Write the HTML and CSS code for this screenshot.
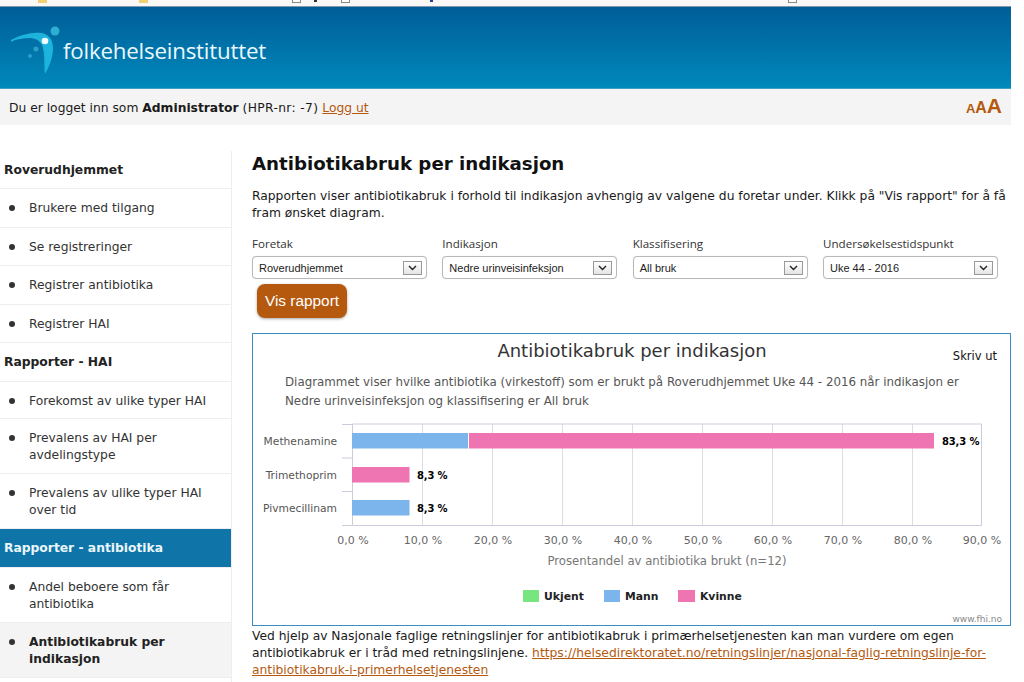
FILE: index.html
```html
<!DOCTYPE html>
<html lang="no">
<head>
<meta charset="utf-8">
<title>Antibiotikabruk per indikasjon</title>
<link rel="stylesheet" href="styles.css">
</head>
<body>
<div class="chrome">
  <i class="mark fav f1"></i><i class="mark fav f2"></i><i class="mark box b1"></i><i class="mark dot d1"></i><i class="mark box b2"></i><i class="mark dot d2"></i><i class="mark box b3"></i>
</div>
<div class="shell">
  <header class="banner">
    <svg class="logo" width="52" height="50" viewBox="0 0 52 50" aria-hidden="true">
      <path d="M1 14 C10 9 22 6 31 7 C38 8 43 13 43 22 C43 32 39 41 35 48 C34 40 35 30 33 22 C32 16 26 12 20 12 C13 12 6 13 1 16 Z" fill="#1cb4dc"/>
      <circle cx="45" cy="5" r="4.500" fill="#2dafd3"/>
      <circle cx="35" cy="15" r="3.300" fill="#f2fbff"/>
      <circle cx="26" cy="23" r="2.500" fill="#2b9fc8"/>
      <circle cx="20" cy="30" r="2" fill="#2b9fc8"/>
    </svg>
    <span class="brand">folkehelseinstituttet</span>
  </header>
  <div class="userbar">
    <p class="who">Du er logget inn som <b>Administrator</b> <span class="hpr">(HPR-nr: -7)</span> <a href="#">Logg ut</a></p>
    <div class="sizes"><span class="s1">A</span><span class="s2">A</span><span class="s3">A</span></div>
  </div>
  <div class="layout">
    <nav class="side">
      <h3 class="sec">Roverudhjemmet</h3>
      <ul>
        <li>Brukere med tilgang</li>
        <li>Se registreringer</li>
        <li>Registrer antibiotika</li>
        <li>Registrer HAI</li>
      </ul>
      <h3 class="sec">Rapporter - HAI</h3>
      <ul class="tight">
        <li>Forekomst av ulike typer HAI</li>
        <li>Prevalens av HAI per avdelingstype</li>
        <li>Prevalens av ulike typer HAI over tid</li>
      </ul>
      <h3 class="sec on">Rapporter - antibiotika</h3>
      <ul class="tight">
        <li>Andel beboere som får antibiotika</li>
        <li class="cur">Antibiotikabruk per indikasjon</li>
      </ul>
    </nav>
    <main class="main">
      <h1>Antibiotikabruk per indikasjon</h1>
      <p class="intro">Rapporten viser antibiotikabruk i forhold til indikasjon avhengig av valgene du foretar under. Klikk på "Vis rapport" for å få fram ønsket diagram.</p>
      <div class="filters">
        <div class="field"><label>Foretak</label><div class="sel"><span>Roverudhjemmet</span><i class="arrow"><svg width="9" height="6" viewBox="0 0 9 6"><path d="M1 1l3.500 3.500L8 1" fill="none" stroke="#222" stroke-width="1.400"/></svg></i></div></div>
        <div class="field"><label>Indikasjon</label><div class="sel"><span>Nedre urinveisinfeksjon</span><i class="arrow"><svg width="9" height="6" viewBox="0 0 9 6"><path d="M1 1l3.500 3.500L8 1" fill="none" stroke="#222" stroke-width="1.400"/></svg></i></div></div>
        <div class="field"><label>Klassifisering</label><div class="sel"><span>All bruk</span><i class="arrow"><svg width="9" height="6" viewBox="0 0 9 6"><path d="M1 1l3.500 3.500L8 1" fill="none" stroke="#222" stroke-width="1.400"/></svg></i></div></div>
        <div class="field"><label>Undersøkelsestidspunkt</label><div class="sel"><span>Uke 44 - 2016</span><i class="arrow"><svg width="9" height="6" viewBox="0 0 9 6"><path d="M1 1l3.500 3.500L8 1" fill="none" stroke="#222" stroke-width="1.400"/></svg></i></div></div>
      </div>
      <button class="run">Vis rapport</button>
      <section class="report">
        <svg class="chart" width="757" height="291" viewBox="253 334 757 291">
          <text x="632" y="357" class="t-title" text-anchor="middle">Antibiotikabruk per indikasjon</text>
          <text x="997" y="360" class="t-print" text-anchor="end">Skriv ut</text>
          <text x="285" y="386" class="t-desc">Diagrammet viser hvilke antibiotika (virkestoff) som er brukt på Roverudhjemmet Uke 44 - 2016 når indikasjon er</text>
          <text x="285" y="405" class="t-desc">Nedre urinveisinfeksjon og klassifisering er All bruk</text>
          <g class="grid">
            <path d="M422.500 424V525M492.500 424V525M562.500 424V525M632.500 424V525M702.500 424V525M772.500 424V525M842.500 424V525M912.500 424V525"/>
          </g>
          <path class="frame" d="M352.500 424H981.500V525.500H352.500ZM342 424.500H352M342 458H352M342 491.500H352M342 525.500H352"/>
          <rect x="352" y="433" width="116" height="15.500" fill="#7cb5ec"/>
          <rect x="469" y="433" width="465" height="15.500" fill="#ee75b2"/>
          <rect x="352" y="467" width="57.500" height="15.500" fill="#ee75b2"/>
          <rect x="352" y="500" width="57.500" height="15.500" fill="#7cb5ec"/>
          <g class="t-cat" text-anchor="end">
            <text x="337" y="445">Methenamine</text>
            <text x="337" y="479">Trimethoprim</text>
            <text x="337" y="512">Pivmecillinam</text>
          </g>
          <g class="t-val">
            <text x="942" y="445">83,3 %</text>
            <text x="417" y="479">8,3 %</text>
            <text x="417" y="512">8,3 %</text>
          </g>
          <g class="t-tick" text-anchor="middle">
            <text x="353" y="544">0,0 %</text><text x="423" y="544">10,0 %</text><text x="493" y="544">20,0 %</text><text x="563" y="544">30,0 %</text><text x="633" y="544">40,0 %</text><text x="703" y="544">50,0 %</text><text x="773" y="544">60,0 %</text><text x="843" y="544">70,0 %</text><text x="913" y="544">80,0 %</text><text x="982" y="544">90,0 %</text>
          </g>
          <text x="667" y="565" class="t-axis" text-anchor="middle">Prosentandel av antibiotika brukt (n=12)</text>
          <rect x="523" y="590" width="16" height="12" fill="#78e67e"/>
          <text x="544" y="600" class="t-leg">Ukjent</text>
          <rect x="604" y="590" width="16" height="12" fill="#7cb5ec"/>
          <text x="625" y="600" class="t-leg">Mann</text>
          <rect x="678" y="590" width="17" height="12" fill="#ee75b2"/>
          <text x="700" y="600" class="t-leg">Kvinne</text>
          <text x="1002" y="622" class="t-credit" text-anchor="end">www.fhi.no</text>
        </svg>
      </section>
      <p class="outro">Ved hjelp av Nasjonale faglige retningslinjer for antibiotikabruk i primærhelsetjenesten kan man vurdere om egen antibiotikabruk er i tråd med retningslinjene. <a href="#">https://helsedirektoratet.no/retningslinjer/nasjonal-faglig-retningslinje-for-antibiotikabruk-i-primerhelsetjenesten</a></p>
    </main>
  </div>
</div>
</body>
</html>
```
FILE: styles.css
```css
* { box-sizing: border-box; }
html, body { margin: 0; height: 682px; overflow: hidden; background: #fff; }
body { font-family: "DejaVu Sans", Verdana, sans-serif; font-size: 12.300px; color: #1a1a1a; }
a { color: #b5590f; }

.chrome { height: 7px; background: #faf8f7; border-bottom: 1px solid #7f98ad; position: relative; width: 1011px; overflow: hidden; }
.mark { position: absolute; top: -3px; }
.fav { width: 9px; height: 6px; background: #f2cf72; }
.f1 { left: 38px; } .f2 { left: 139px; }
.box { width: 9px; height: 6px; border: 1px solid #888; background: #fff; }
.b1 { left: 292px; } .b2 { left: 341px; } .b3 { left: 788px; }
.dot { width: 3px; height: 5px; background: #333; }
.d1 { left: 314px; } .d2 { left: 430px; background: #24408f; }

.shell { width: 1011px; }
.banner { height: 82px; background: linear-gradient(#005d97, #0089bc); display: flex; align-items: flex-start; padding: 19px 0 0 10px; gap: 1px; border-bottom: 1px solid #3f9fc6; }
.brand { font-family: "Open Sans", sans-serif; font-size: 22.300px; color: #eaf8fc; letter-spacing: -0.200px; font-weight: 500; margin-top: 9px; }

.userbar { height: 36px; background: #f4f4f4; display: flex; align-items: center; justify-content: space-between; padding: 1px 9px 0; }
.who { margin: 0; }
.hpr { letter-spacing: 0.350px; }
.sizes { display: flex; align-items: baseline; font-family: "Liberation Sans", Arial, sans-serif; font-weight: bold; color: #b5590f; line-height: 1; margin-bottom: 5px; }
.s1 { font-size: 13px; } .s2 { font-size: 16px; } .s3 { font-size: 21px; }

.layout { display: flex; padding-top: 26px; }
.side { width: 232px; flex: none; border-right: 1px solid #eee; height: 531px; overflow: hidden; }
.sec { margin: 0; font-size: 12.300px; font-weight: bold; line-height: 16px; padding: 11px 4px 10.300px; border-bottom: 1px solid #eee; color: #222; }
.sec.on { background: #0f75a8; color: #eaf6fb; padding-bottom: 11px; }
.side ul { list-style: none; margin: 0; padding: 0; }
.side li { position: relative; padding: 11px 20px 9.500px 29px; line-height: 17px; border-bottom: 1px solid #eee; color: #333; }
.side .tight li { padding-bottom: 8.800px; }
.side li::before { content: ""; position: absolute; left: 9px; top: 16px; width: 6px; height: 6px; border-radius: 50%; background: #333; }
.side li.cur { background: #f4f4f4; font-weight: bold; color: #222; }

.main { flex: 1; padding-left: 20px; min-width: 0; }
h1 { margin: 0; font-size: 18.200px; line-height: 26px; font-weight: bold; color: #111; }
.intro { margin: 11px 0 0; line-height: 17px; }
.filters { display: grid; grid-template-columns: repeat(4, 175px); column-gap: 15.330px; margin-top: 14px; }
.field label { display: block; line-height: 15px; color: #333; font-family: "Open Sans", sans-serif; font-size: 11.600px; }
.sel { margin-top: 5px; height: 23px; border: 1px solid #b8b8b8; border-radius: 4px; background: #fff; display: flex; align-items: center; justify-content: space-between; padding: 0 4px 0 6px; font: 11px "Liberation Sans", Arial, sans-serif; color: #222; box-shadow: 0 0 1px #ddd; }
.arrow { width: 19px; height: 14px; border: 1px solid #999; background: linear-gradient(#fff, #e4e4e4); display: flex; align-items: center; justify-content: center; }
.arrow svg { display: block; }
.run { display: block; margin: 5px 0 0 5px; width: 90px; height: 34px; background: #b5590f; color: #fff; border: 0; border-radius: 8px; font: 15.400px "Liberation Sans", Arial, sans-serif; box-shadow: 0 1px 3px rgba(0,0,0,.35); padding: 0; }
.report { margin-top: 15px; height: 293px; border: 1px solid #3b8fbe; }
.chart { display: block; }
.chart text { font-family: "DejaVu Sans", Verdana, sans-serif; }
.t-title { font-size: 18px; fill: #333; }
.t-print { font-size: 11.500px; fill: #111; }
.t-desc { font-size: 11.850px; fill: #555; }
.grid path { stroke: #ddd; fill: none; }
.frame { stroke: #ccd; fill: none; }
.t-cat { font-size: 10.700px; fill: #555; }
.t-val { font-size: 10px; font-weight: bold; fill: #000; letter-spacing: -0.150px; }
.t-tick { font-size: 11px; fill: #666; }
.t-axis { font-size: 11.700px; fill: #777; }
.t-leg { font-size: 10.800px; font-weight: bold; fill: #222; }
.t-credit { font-size: 9px; fill: #888; }
.outro { margin: 2px 0 0; line-height: 17px; }
```
